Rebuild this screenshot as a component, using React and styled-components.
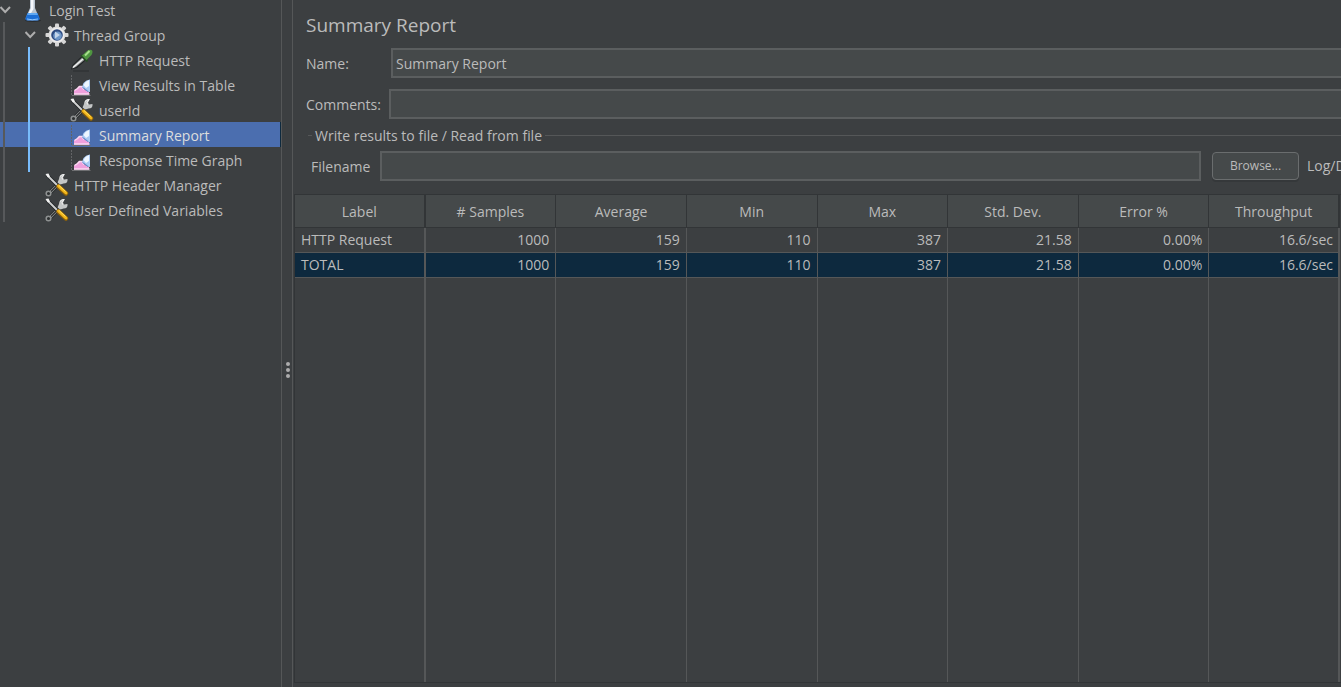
import React from "react";
import styled, { createGlobalStyle, css } from "styled-components";

const color = {
  bg: "#3c3f41",
  field: "#45494a",
  border: "#646666",
  line: "#555758",
  dark: "#323537",
  text: "#bbbbbb",
  select: "#4b6eaf",
  rowSelect: "#0d293e",
  guide: "#57595b",
  guideActive: "#78bcfb",
};

const GlobalStyle = createGlobalStyle`
  *, *::before, *::after { box-sizing: border-box; }
  body {
    margin: 0;
    background: ${color.bg};
    color: ${color.text};
    font: 14px/24px "Open Sans", "Noto Sans", sans-serif;
  }
`;

const Window = styled.div`
  display: flex;
  height: 100vh;
  overflow: hidden;
`;

const Sidebar = styled.nav`
  flex: 0 0 281px;
  overflow: hidden;
`;

const Tree = styled.ul`
  list-style: none;
  margin: -3px 0 0;
  padding: 0;
`;

const TreeRow = styled.li`
  display: flex;
  align-items: center;
  height: 25px;
  margin-right: 1px;
  white-space: nowrap;
  ${(p) =>
    p.$selected &&
    css`
      background: ${color.select};
      color: #dddddd;
      box-shadow: 1px 0 0 ${color.rowSelect};
    `}
`;

const TreeLabel = styled.span`
  padding-top: 2px;
`;

const Guide = styled.span`
  flex: 0 0 25px;
  align-self: stretch;
  padding-left: 3px;
  &::before {
    content: "";
    display: block;
    width: 2px;
    height: 100%;
    background: ${(p) => (p.$active ? color.guideActive : color.guide)};
  }
`;

const Toggle = styled.button`
  flex: 0 0 20px;
  height: 24px;
  padding: 0;
  border: 0;
  background: none;
  display: flex;
  align-items: center;
`;

const Indent = styled.span`
  flex: 0 0 20px;
`;

const TreeIcon = styled.svg`
  flex: 0 0 24px;
  width: 24px;
  height: 24px;
  margin-right: 5px;
`;

const Splitter = styled.div`
  flex: 0 0 12px;
  display: flex;
  flex-direction: column;
  align-items: center;
  justify-content: center;
  gap: 2px;
  padding: 52px 0 0 1px;
  border-left: 1px solid ${color.line};
  border-right: 1px solid ${color.line};
`;

const Dot = styled.i`
  width: 4px;
  height: 4px;
  border-radius: 2px;
  background: #adadad;
`;

const Main = styled.main`
  flex: 1;
  min-width: 0;
  display: flex;
  flex-direction: column;
  padding-bottom: 4px;
  overflow: hidden;
`;

const Title = styled.h1`
  margin: 11px 0 9px 13px;
  font-size: 19px;
  line-height: 28px;
  font-weight: 400;
`;

const Field = styled.div`
  display: flex;
  align-items: center;
  gap: 8px;
  margin: 0 0 0 13px;
  & + & {
    margin-top: 11px;
  }
`;

const FieldLabel = styled.label`
  flex: none;
  min-width: ${(p) => p.$min || 0}px;
  padding-top: 2px;
`;

const TextInput = styled.input`
  flex: 1;
  min-width: 0;
  height: 30px;
  padding: 0 3px;
  border: 2px solid #5b5e5f;
  border-right-width: ${(p) => (p.$open ? 0 : 2)}px;
  background: ${color.field};
  color: inherit;
  font: inherit;
  outline: 0;
`;

const FileGroup = styled.fieldset`
  min-width: 0;
  margin: 0;
  padding: 0 0 0 3px;
  border: 0;
`;

const GroupLegend = styled.legend`
  display: flex;
  align-items: center;
  width: 100%;
  height: 32px;
  padding: 0 0 0 12px;
  gap: 3px;
  &::before,
  &::after {
    content: "";
    width: 4px;
    height: 1px;
    background: ${color.line};
  }
  &::after {
    flex: 1;
  }
`;

const LegendText = styled.span`
  padding-top: 2px;
`;

const FileRow = styled.div`
  display: flex;
  align-items: center;
  gap: 8px;
  padding-left: 15px;
`;

const Browse = styled.button`
  flex: 0 0 87px;
  height: 28px;
  margin-left: 3px;
  padding: 0;
  border: 1px solid #6a6d6e;
  border-radius: 4px;
  background: ${color.field};
  box-shadow: 0 2px 0 #35383a;
  color: inherit;
  font: 12px/24px "Open Sans", "Noto Sans", sans-serif;
`;

const Clipped = styled.span`
  flex: 0 0 34px;
  overflow: hidden;
  white-space: nowrap;
`;

const TableArea = styled.section`
  flex: 1;
  min-height: 0;
  margin: 13px 0 0 1px;
  padding-right: 1px;
  border: solid ${color.dark};
  border-width: 1px 0 1px 1px;
`;

const Table = styled.table`
  width: 100%;
  height: 100%;
  table-layout: fixed;
  border-collapse: separate;
  border-spacing: 0;
`;

const HeadCell = styled.th`
  height: 33px;
  padding: 2px 0 0;
  border-right: 1px solid ${color.dark};
  border-bottom: 1px solid ${color.dark};
  background: ${color.field};
  font-weight: 400;
  &:first-child,
  &:last-child {
    border-right-width: 2px;
  }
`;

const Cell = styled.td`
  height: ${(p) => (p.$filler ? "auto" : "25px")};
  padding: 0 6px;
  border-right: 1px solid ${color.line};
  border-bottom: ${(p) => (p.$filler ? 0 : 1)}px solid ${color.line};
  background: ${(p) => (p.$selected ? color.rowSelect : "transparent")};
  text-align: right;
  &:first-child {
    text-align: left;
  }
  &:first-child,
  &:last-child {
    border-right-width: 2px;
  }
  &:last-child {
    padding-right: 5px;
  }
`;

function Chevron() {
  return (
    <svg width="11" height="10" viewBox="0 0 11 10" fill="none" stroke="#adadad" strokeWidth="2">
      <path d="M0.5 2 L5.2 7 L10 2" />
    </svg>
  );
}

function FlaskIcon() {
  return (
    <TreeIcon viewBox="0 0 24 24">
      <ellipse cx="13" cy="22.5" rx="8" ry="1.500" fill="#292c2e" />
      <path d="M10 1h5v9l4 9.500q1 3-2 3H8q-3 0-2-3l4-9.500z" fill="#b9c4d0" />
      <path d="M11 2h2.500v9l-3 5H8l3-6z" fill="#f5f8fc" />
      <path d="M7.500 15h10l2 5q.5 2.500-2 2.500h-10q-2.500 0-2-2.500z" fill="#1c6fd6" />
      <path d="M8 15h9l1 2H7z" fill="#5fa8f2" />
      <path d="M7 21q5 1.500 11 0" stroke="#8dc6ff" fill="none" />
    </TreeIcon>
  );
}

function GearIcon() {
  return (
    <TreeIcon viewBox="0 0 24 24">
      <g fill="#d6d6d6">
        {[0, 45, 90, 135].map((a) => (
          <rect key={a} x="10" y="0.500" width="4" height="23" rx="1" transform={`rotate(${a} 12 12)`} />
        ))}
        <circle cx="12" cy="12" r="8.500" />
      </g>
      <circle cx="12" cy="12" r="7.500" fill="#ececec" />
      <circle cx="12" cy="12" r="5.800" fill="#2c4a80" />
      <circle cx="12.500" cy="12.800" r="4.300" fill="#6f97c8" />
      <path d="M10 8.500l5 3.500-5 3.500z" fill="#c3d5ea" />
    </TreeIcon>
  );
}

function PipetteIcon() {
  return (
    <TreeIcon viewBox="0 0 24 24">
      <path d="M3 23h16" stroke="#2b2e30" />
      <path d="M1 21.500l1.500-4.500L12 8l4 4-9 8z" fill="#1f2223" />
      <path d="M2 20.500l1.500-3L12 9.500l2.500 2.500-8.500 7z" fill="#8f9393" />
      <path d="M3 19.500l10-8.500" stroke="#f1f1f1" strokeWidth="1.500" />
      <path d="M11 7l6.500 6.500" stroke="#274d25" strokeWidth="2" />
      <path d="M12 7.500l5-4.500q2.500-2 4.500-1t0 5l-5 5z" fill="#4f9640" />
      <path d="M15 7.500l4.500-4.500" stroke="#a6df8b" strokeWidth="2" />
    </TreeIcon>
  );
}

function GraphIcon() {
  return (
    <TreeIcon viewBox="0 0 24 24">
      <path d="M1.500 2v20" stroke="#626466" strokeDasharray="2 1" />
      <path d="M2 22.500h18.500" stroke="#6e6f71" />
      <path d="M4 21.500v-4l3-2 2-2.500h3l3 4 4 2v2.500z" fill="#ef9fdc" />
      <path d="M4.500 17.500l3-2 2-2h2.500l2 3M4 21h15.500" stroke="#fbd9f1" strokeWidth="1.500" fill="none" />
      <path d="M12 14l1.500-4 3-2.500 3.500-1v12.500l-3-.5-2-2z" fill="#a9c9f2" />
      <path d="M13.500 12l2-3 3.500-2v6l-3 2z" fill="#edf6ff" />
      <path d="M12.500 14.500l3 2 2.500 2" stroke="#5b7fc4" fill="none" />
    </TreeIcon>
  );
}

function ToolsIcon() {
  return (
    <TreeIcon viewBox="0 0 24 24" fill="none">
      <path d="M4.500 20L16 8.500" stroke="#1f2223" strokeWidth="4.500" />
      <path d="M5 19.500L16 8.500" stroke="#8e9191" strokeWidth="3" />
      <path d="M6 18.500L14 10.500" stroke="#2f3233" strokeWidth="1.500" />
      <circle cx="3.500" cy="20.500" r="2.300" fill="#2f3233" stroke="#8e9191" strokeWidth="1.500" />
      <path d="M20 1l-2 3.500 1 2 3.500-.5q.5 4.500-4 4.500l-3 1-3-2 1.500-3.500q0-5 6-5z" fill="#c4c6c6" />
      <path d="M15 3.500q1.500-2 4-2l-2 3 .5 2" stroke="#f4f4f4" />
      <path d="M2 2l10 10" stroke="#1f2223" strokeWidth="3.500" />
      <path d="M2 2l10 10" stroke="#cfd0d0" strokeWidth="2" />
      <path d="M0.500 1l3-.5 1.500 3-2 1z" fill="#f2f2f2" />
      <path d="M13.500 13.500l7.500 7" stroke="#8a5f0b" strokeWidth="4.500" strokeLinecap="round" />
      <path d="M13.500 13l7.500 7" stroke="#f3b61a" strokeWidth="3" strokeLinecap="round" />
      <path d="M14 12.500l6.500 6" stroke="#ffdf62" />
    </TreeIcon>
  );
}

const nodes = [
  { label: "Login Test", level: 0, Icon: FlaskIcon, open: true },
  { label: "Thread Group", level: 1, Icon: GearIcon, open: true },
  { label: "HTTP Request", level: 2, Icon: PipetteIcon },
  { label: "View Results in Table", level: 2, Icon: GraphIcon },
  { label: "userId", level: 2, Icon: ToolsIcon },
  { label: "Summary Report", level: 2, Icon: GraphIcon, selected: true },
  { label: "Response Time Graph", level: 2, Icon: GraphIcon },
  { label: "HTTP Header Manager", level: 1, Icon: ToolsIcon },
  { label: "User Defined Variables", level: 1, Icon: ToolsIcon },
];

const columns = ["Label", "# Samples", "Average", "Min", "Max", "Std. Dev.", "Error %", "Throughput"];

const results = [
  { values: ["HTTP Request", "1000", "159", "110", "387", "21.58", "0.00%", "16.6/sec"] },
  { values: ["TOTAL", "1000", "159", "110", "387", "21.58", "0.00%", "16.6/sec"], selected: true },
];

export default function App() {
  return (
    <Window>
      <GlobalStyle />
      <Sidebar>
        <Tree>
          {nodes.map(({ label, level, Icon, open, selected }) => (
            <TreeRow key={label} $selected={selected}>
              {level > 0 && <Guide />}
              {level > 1 && <Guide $active />}
              {open ? (
                <Toggle aria-label={`Collapse ${label}`}>
                  <Chevron />
                </Toggle>
              ) : (
                <Indent />
              )}
              <Icon />
              <TreeLabel>{label}</TreeLabel>
            </TreeRow>
          ))}
        </Tree>
      </Sidebar>
      <Splitter>
        <Dot />
        <Dot />
        <Dot />
      </Splitter>
      <Main>
        <Title>Summary Report</Title>
        <Field>
          <FieldLabel htmlFor="name" $min={77}>Name:</FieldLabel>
          <TextInput id="name" defaultValue="Summary Report" $open />
        </Field>
        <Field>
          <FieldLabel htmlFor="comments" $min={75}>Comments:</FieldLabel>
          <TextInput id="comments" $open />
        </Field>
        <FileGroup>
          <GroupLegend>
            <LegendText>Write results to file / Read from file</LegendText>
          </GroupLegend>
          <FileRow>
            <FieldLabel htmlFor="filename" $min={61}>Filename</FieldLabel>
            <TextInput id="filename" />
            <Browse>Browse...</Browse>
            <Clipped>Log/Display Only:</Clipped>
          </FileRow>
        </FileGroup>
        <TableArea>
          <Table>
            <thead>
              <tr>
                {columns.map((c) => (
                  <HeadCell key={c} scope="col">{c}</HeadCell>
                ))}
              </tr>
            </thead>
            <tbody>
              {results.map((r) => (
                <tr key={r.values[0]}>
                  {r.values.map((v, i) => (
                    <Cell key={columns[i]} $selected={r.selected}>{v}</Cell>
                  ))}
                </tr>
              ))}
              <tr aria-hidden="true">
                {columns.map((c) => (
                  <Cell key={c} $filler />
                ))}
              </tr>
            </tbody>
          </Table>
        </TableArea>
      </Main>
    </Window>
  );
}
